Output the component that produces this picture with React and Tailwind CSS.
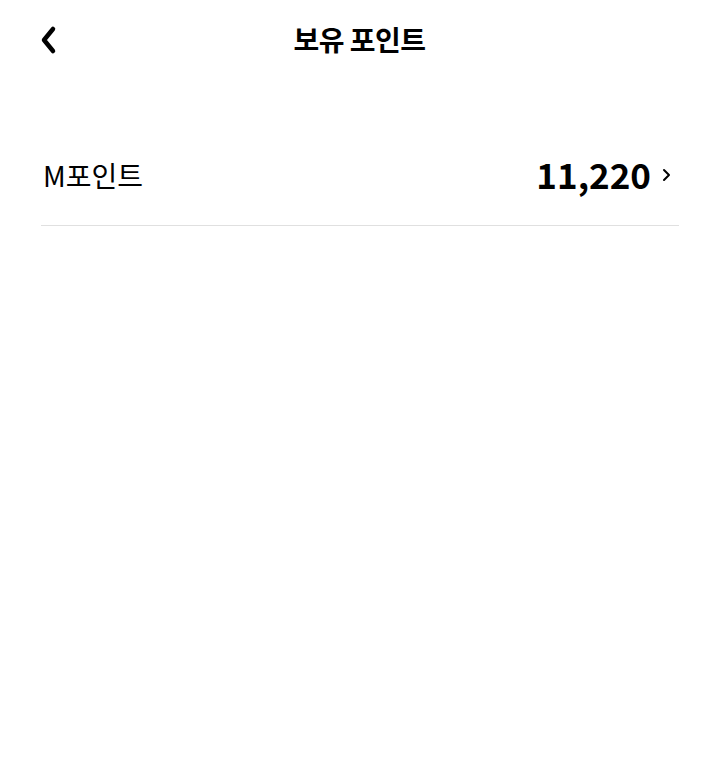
import React from 'react';

const font = { fontFamily: '"Noto Sans CJK KR", "Noto Sans", sans-serif' };

export default function App() {
  return (
    <div className="min-h-[775px] w-full bg-white text-black" style={font}>
      <header className="relative flex h-[80px] items-center justify-center">
        <button className="absolute left-[36px] top-[24px] flex h-[32px] w-[24px] items-center justify-center">
          <svg width="20" height="30" viewBox="0 0 20 30" fill="none">
            <path d="M15 4 L6 15 L15 26" stroke="#000" strokeWidth="4.5" strokeLinecap="round" strokeLinejoin="round" />
          </svg>
        </button>
        <h1 className="-mt-[2px] text-[28px] font-bold tracking-[-0.5px]">보유 포인트</h1>
      </header>

      <div className="ml-[41px] mr-[40px] mt-[50px] flex h-[96px] items-center justify-between border-b border-[#e0e0e0] pb-[6px]">
        <span className="pl-[2px] text-[28px]">M포인트</span>
        <div className="flex items-center gap-[10px] pr-[8px]">
          <span className="text-[35px] font-bold">11,220</span>
          <svg width="10" height="16" viewBox="0 0 10 16" fill="none">
            <path d="M3 3 L8 8 L3 13" stroke="#000" strokeWidth="2" strokeLinecap="round" strokeLinejoin="round" />
          </svg>
        </div>
      </div>
    </div>
  );
}
